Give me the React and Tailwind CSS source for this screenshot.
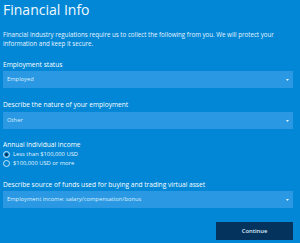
const Select = ({ value }) => (
  <div className="flex items-center justify-between h-[17px] bg-[#2a98e2] pl-[4px] pr-[4px] text-[5.8px] text-[#dcefff]">
    <span>{value}</span>
    <svg width="3" height="2" viewBox="0 0 3 2">
      <path d="M0 0h3L1.5 2z" fill="#e6f4ff" />
    </svg>
  </div>
);

const Label = ({ children, className = '' }) => (
  <div className={`text-[6.6px] leading-[9px] text-white font-medium ${className}`}>{children}</div>
);

const Radio = ({ checked, label }) => (
  <div className="flex items-center gap-[3px] h-[9px]">
    <span className="w-[7px] h-[7px] rounded-full border border-[#cfe8fb] flex items-center justify-center">
      {checked && <span className="w-[3px] h-[3px] rounded-full bg-[#0b2a4a]" />}
    </span>
    <span className="text-[5.8px] text-[#e6f4ff]">{label}</span>
  </div>
);

export default function App() {
  return (
    <div
      className="w-[300px] h-[243px] bg-[#0187d6] pl-[3px] pr-[7px] overflow-hidden text-white"
      style={{ fontFamily: '"Open Sans", "Noto Sans", sans-serif' }}
    >
      <h1 className="text-[14px] leading-[16px] font-normal pt-[2px] text-[#f2f9ff]">Financial Info</h1>
      <p className="mt-[12px] text-[6.2px] leading-[9px] text-[#e8f4ff]">
        Financial industry regulations require us to collect the following from you. We will protect your information and keep it secure.
      </p>

      <Label className="mt-[12px]">Employment status</Label>
      <div className="mt-[2px]"><Select value="Employed" /></div>

      <Label className="mt-[12px]">Describe the nature of your employment</Label>
      <div className="mt-[3px]"><Select value="Other" /></div>

      <Label className="mt-[11px]">Annual individual income</Label>
      <div className="mt-[1px] flex flex-col">
        <Radio checked label="Less than $100,000 USD" />
        <Radio label="$100,000 USD or more" />
      </div>

      <Label className="mt-[12px]">Describe source of funds used for buying and trading virtual asset</Label>
      <div className="mt-[2px]"><Select value="Employment income: salary/compensation/bonus" /></div>

      <div className="flex justify-end mt-[14px]">
        <button className="w-[77px] h-[18px] bg-[#04335e] text-[5.8px] font-semibold text-[#dcebf7]">
          Continue
        </button>
      </div>
    </div>
  );
}
